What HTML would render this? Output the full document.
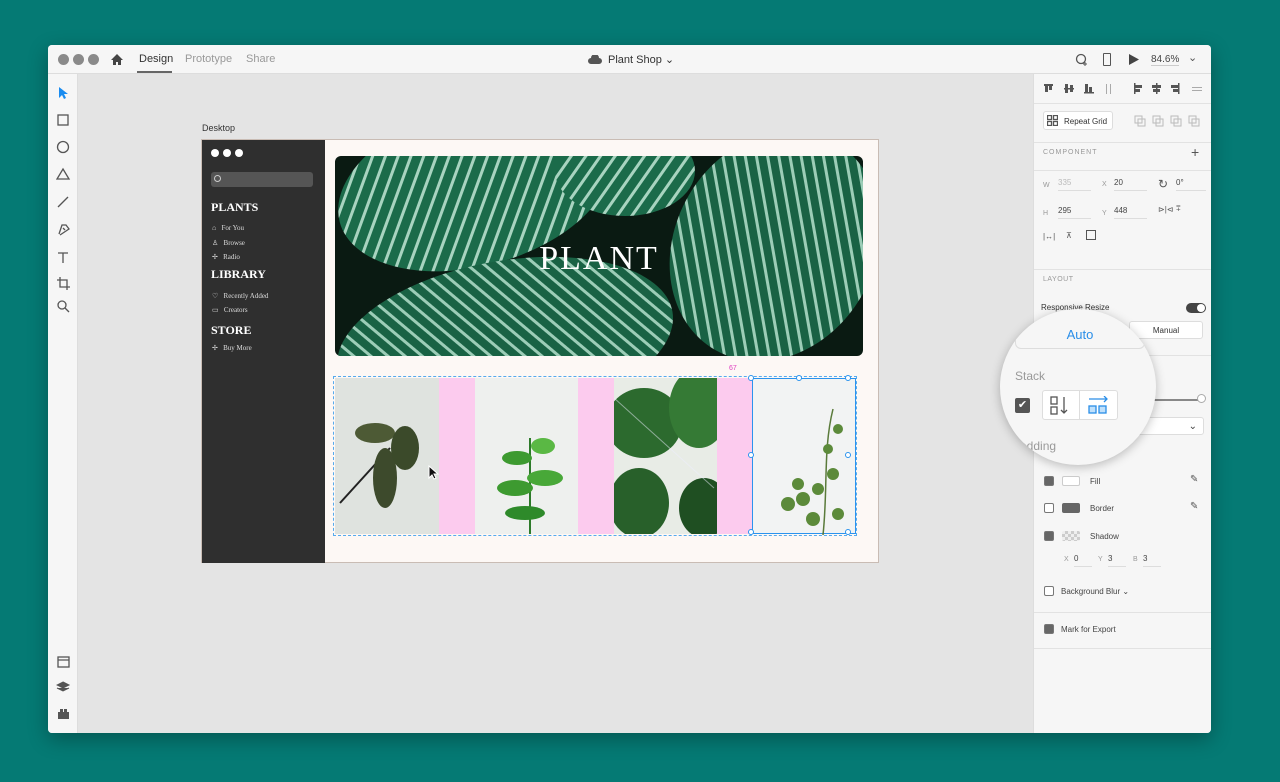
<!DOCTYPE html><html><head><style>
*{box-sizing:border-box;margin:0;padding:0}
body{width:1280px;height:782px;background:#057a74;font-family:"Liberation Sans",sans-serif;position:relative;overflow:hidden}
.a{position:absolute}
.win{left:48px;top:45px;width:1163px;height:688px;background:#e4e4e4;border-radius:4px;overflow:hidden;box-shadow:0 6px 20px rgba(0,0,0,.3)}
.tb{left:0;top:0;width:1163px;height:29px;background:#f6f6f6;border-bottom:1px solid #ddd}
.dot{width:11px;height:11px;border-radius:50%;background:#8a8a8a;top:9px}
.tab{top:8px;font-size:11px;color:#999}
.lt{left:0;top:29px;width:30px;height:659px;background:#f6f6f6;border-right:1px solid #ddd}
.rp{left:985px;top:29px;width:178px;height:659px;background:#f6f6f6;border-left:1px solid #ddd;font-size:8px;color:#444}
.hr{left:0;width:178px;height:1px;background:#e2e2e2}
.g{color:#999}
.sb{font-family:"Liberation Serif",serif;color:#fff}
.cb{width:10px;height:10px;border:1px solid #777;border-radius:2px;background:#666}
.cb.e{background:#fff}
.ic{stroke:#555;fill:none;stroke-width:1.3}
</style></head><body>
<div class="a win">
 <div class="a tb">
  <div class="a dot" style="left:10px"></div><div class="a dot" style="left:25px"></div><div class="a dot" style="left:40px"></div>
  <svg class="a" style="left:62px;top:8px" width="14" height="13"><path d="M7 1L1 7h2v5h3V9h2v3h3V7h2z" fill="#444"/></svg>
  <div class="a tab" style="left:91px;color:#333">Design</div>
  <div class="a" style="left:89px;top:26px;width:35px;height:2px;background:#666"></div>
  <div class="a tab" style="left:137px">Prototype</div>
  <div class="a tab" style="left:198px">Share</div>
  <svg class="a" style="left:540px;top:10px" width="14" height="9"><path d="M3 9a3 3 0 010-6 4 4 0 018 0 3 3 0 010 6z" fill="#555"/></svg>
  <div class="a tab" style="left:560px;color:#333">Plant Shop ⌄</div>
  <svg class="a" style="left:1027px;top:8px" width="14" height="14"><circle cx="6" cy="6" r="4.5" class="ic" stroke-width="2"/><path d="M10 9v4M8 11h4" stroke="#555"/></svg>
  <div class="a" style="left:1055px;top:8px;width:8px;height:13px;border:1.5px solid #555;border-radius:1px"></div>
  <svg class="a" style="left:1081px;top:9px" width="10" height="11"><path d="M0 0l10 5.5L0 11z" fill="#444"/></svg>
  <div class="a tab" style="left:1103px;color:#444;font-size:10px;top:9px;border-bottom:1px solid #ccc">84.6%</div>
  <div class="a tab" style="left:1140px;color:#555;top:6px">⌄</div>
 </div>
 <div class="a lt">
  <svg class="a" style="left:10px;top:13px" width="10" height="12"><path d="M1 0v11l3-3 2 4 2-1-2-4h4z" fill="#1a8cf0"/></svg>
  <svg class="a" style="left:8px;top:38px" width="16" height="260">
   <rect x="2" y="3" width="10" height="10" class="ic"/><circle cx="7" cy="35" r="5.5" class="ic"/><path d="M7 57l6 10H1z" class="ic"/><path d="M2 95l10-10" class="ic"/>
   <path d="M3 122l3-9 4 0 3 4-9 6M7 116l2 2" class="ic"/><path d="M2 141h10M7 141v10" class="ic" stroke-width="1.6"/>
   <path d="M4 165v10h10M1 168h10v10" class="ic"/><circle cx="6" cy="193" r="4" class="ic"/><path d="M9 196l4 4" class="ic"/>
  </svg>
  <svg class="a" style="left:8px;top:580px" width="16" height="72">
   <rect x="2" y="3" width="11" height="10" class="ic"/><path d="M2 6h11" class="ic"/><path d="M7 28l6 3-6 3-6-3z M1 34l6 3 6-3" fill="#555" stroke="#555"/><rect x="2" y="58" width="11" height="7" fill="#555"/><rect x="4" y="55" width="3" height="4" fill="#555"/><rect x="8" y="55" width="3" height="4" fill="#555"/>
  </svg>
 </div>
 <div class="a" style="left:154px;top:78px;font-size:9px;color:#333">Desktop</div>
 <div class="a" style="left:153px;top:94px;width:678px;height:424px;background:#fdf8f5;border:1px solid #c9bcb4">
  <div class="a" style="left:0;top:0;width:123px;height:423px;background:#2f2f2f">
   <div class="a" style="left:9px;top:9px;width:8px;height:8px;border-radius:50%;background:#fff"></div>
   <div class="a" style="left:21px;top:9px;width:8px;height:8px;border-radius:50%;background:#fff"></div>
   <div class="a" style="left:33px;top:9px;width:8px;height:8px;border-radius:50%;background:#fff"></div>
   <div class="a" style="left:9px;top:32px;width:102px;height:15px;border-radius:3px;background:#555"></div>
   <div class="a" style="left:12px;top:35px;width:7px;height:7px;border:1px solid #ccc;border-radius:50%"></div>
   <div class="a sb" style="left:9px;top:60px;font-size:12px;font-weight:bold">PLANTS</div>
   <div class="a sb" style="left:10px;top:81px;font-size:7px;line-height:14.5px;color:#ddd">⌂&nbsp;&nbsp; For You<br>♙&nbsp;&nbsp; Browse<br>✢&nbsp;&nbsp; Radio</div>
   <div class="a sb" style="left:9px;top:127px;font-size:12px;font-weight:bold">LIBRARY</div>
   <div class="a sb" style="left:10px;top:149px;font-size:7px;line-height:14px;color:#ddd">♡&nbsp;&nbsp; Recently Added<br>▭&nbsp;&nbsp; Creators</div>
   <div class="a sb" style="left:9px;top:183px;font-size:12px;font-weight:bold">STORE</div>
   <div class="a sb" style="left:10px;top:204px;font-size:7px;color:#ddd">✢&nbsp;&nbsp; Buy More</div>
  </div>
  <div class="a" style="left:133px;top:16px;width:528px;height:200px;border-radius:6px;overflow:hidden;background:#0a1a12">
   <svg width="528" height="200">
    <defs><pattern id="st" width="12" height="12" patternUnits="userSpaceOnUse" patternTransform="rotate(35)"><rect width="12" height="12" fill="#1b6b4a"/><rect width="3" height="12" fill="#a8d4c0"/></pattern>
    <pattern id="st2" width="11" height="11" patternUnits="userSpaceOnUse" patternTransform="rotate(-40)"><rect width="11" height="11" fill="#196244"/><rect width="3" height="11" fill="#9ccdb7"/></pattern></defs>
    <ellipse cx="140" cy="30" rx="140" ry="80" fill="url(#st)" transform="rotate(-15 140 30)"/>
    <ellipse cx="440" cy="90" rx="100" ry="120" fill="url(#st2)" transform="rotate(30 440 90)"/>
    <ellipse cx="170" cy="185" rx="170" ry="80" fill="url(#st2)" transform="rotate(-10 170 185)"/>
    <ellipse cx="290" cy="15" rx="70" ry="45" fill="url(#st)"/>
   </svg>
   <div class="a" style="left:0;top:84px;width:528px;text-align:center;font-family:'Liberation Serif',serif;font-size:34px;color:#fff;letter-spacing:2px">PLANT</div>
  </div>
  <div class="a" style="left:131px;top:236px;width:524px;height:160px;border:1px dashed #55aaee"></div>
  <div class="a" style="left:133px;top:238px;width:104px;height:156px;background:#dfe3df">
   <svg width="104" height="156"><path d="M5 125L55 70" stroke="#222" stroke-width="2"/><ellipse cx="50" cy="100" rx="12" ry="30" fill="#3d4a2c"/><ellipse cx="40" cy="55" rx="20" ry="10" fill="#4d5a35"/><ellipse cx="70" cy="70" rx="14" ry="22" fill="#3b4a2a"/></svg>
  </div>
  <div class="a" style="left:237px;top:238px;width:36px;height:156px;background:#fccbee"></div>
  <div class="a" style="left:273px;top:238px;width:103px;height:156px;background:#eef0ee">
   <svg width="103" height="156"><path d="M55 156V60" stroke="#2d7a2a" stroke-width="2"/><ellipse cx="40" cy="110" rx="18" ry="8" fill="#3d9a30"/><ellipse cx="70" cy="100" rx="18" ry="8" fill="#48a838"/><ellipse cx="42" cy="80" rx="15" ry="7" fill="#3d9a30"/><ellipse cx="68" cy="68" rx="12" ry="8" fill="#5ab844"/><ellipse cx="50" cy="135" rx="20" ry="7" fill="#2e8a2a"/></svg>
  </div>
  <div class="a" style="left:376px;top:238px;width:36px;height:156px;background:#fccbee"></div>
  <div class="a" style="left:412px;top:238px;width:103px;height:156px;background:#e8ece6">
   <svg width="103" height="156"><ellipse cx="30" cy="45" rx="38" ry="35" fill="#2c6a2e"/><ellipse cx="85" cy="30" rx="30" ry="40" fill="#357a35"/><ellipse cx="25" cy="125" rx="30" ry="35" fill="#28602a"/><ellipse cx="90" cy="130" rx="25" ry="30" fill="#1f4f22"/><path d="M0 20L100 110" stroke="#eef" stroke-width="1" opacity=".5"/></svg>
  </div>
  <div class="a" style="left:515px;top:238px;width:35px;height:156px;background:#fccbee"></div>
  <div class="a" style="left:550px;top:238px;width:104px;height:156px;background:#f2f3f3;border:1px solid #2b93ee">
   <svg width="104" height="156"><path d="M70 156C75 110 70 70 80 30" stroke="#5a7a3a" stroke-width="1.5" fill="none"/><g fill="#5c8a3a"><circle cx="35" cy="125" r="7"/><circle cx="50" cy="120" r="7"/><circle cx="65" cy="110" r="6"/><circle cx="80" cy="95" r="6"/><circle cx="75" cy="70" r="5"/><circle cx="85" cy="50" r="5"/><circle cx="45" cy="105" r="6"/><circle cx="60" cy="140" r="7"/><circle cx="85" cy="135" r="6"/></g></svg>
  </div>
  <div class="a" style="left:527px;top:225px;font-size:7px;color:#e040c0">67</div>
  <div class="a" style="left:544px;top:233px;width:111px;height:165px">
   <div class="a" style="left:2px;top:2px;width:6px;height:6px;border:1px solid #2b93ee;background:#fff;border-radius:50%"></div>
   <div class="a" style="left:50px;top:2px;width:6px;height:6px;border:1px solid #2b93ee;background:#fff;border-radius:50%"></div>
   <div class="a" style="left:99px;top:2px;width:6px;height:6px;border:1px solid #2b93ee;background:#fff;border-radius:50%"></div>
   <div class="a" style="left:2px;top:79px;width:6px;height:6px;border:1px solid #2b93ee;background:#fff;border-radius:50%"></div>
   <div class="a" style="left:99px;top:79px;width:6px;height:6px;border:1px solid #2b93ee;background:#fff;border-radius:50%"></div>
   <div class="a" style="left:2px;top:156px;width:6px;height:6px;border:1px solid #2b93ee;background:#fff;border-radius:50%"></div>
   <div class="a" style="left:99px;top:156px;width:6px;height:6px;border:1px solid #2b93ee;background:#fff;border-radius:50%"></div>
  </div>
 </div>
 <svg class="a" style="left:380px;top:420px" width="11" height="15"><path d="M1 1v12l3-3 2 4 2-1-2-4h4z" fill="#111" stroke="#fff"/></svg>
 <div class="a rp">
  <svg class="a" style="left:10px;top:8px" width="160" height="14" fill="#555"><rect x="0" y="2" width="9" height="2"/><rect x="1" y="2" width="3" height="8"/><rect x="5" y="2" width="3" height="6"/><rect x="20" y="6" width="10" height="1.5"/><rect x="21" y="2" width="3" height="9"/><rect x="26" y="3" width="3" height="7"/><rect x="40" y="10" width="10" height="1.5"/><rect x="41" y="2" width="3" height="8"/><rect x="45" y="5" width="3" height="5"/><rect x="62" y="2" width="1" height="10" fill="#aaa"/><rect x="66" y="2" width="1" height="10" fill="#aaa"/><rect x="90" y="1" width="1.5" height="11"/><rect x="91" y="3" width="7" height="3"/><rect x="91" y="7" width="5" height="3"/><rect x="112" y="1" width="1.5" height="11"/><rect x="108" y="3" width="9" height="3"/><rect x="109" y="7" width="7" height="3"/><rect x="134" y="1" width="1.5" height="11"/><rect x="127" y="3" width="7" height="3"/><rect x="129" y="7" width="5" height="3"/><rect x="148" y="5" width="10" height="1" fill="#aaa"/><rect x="148" y="8" width="10" height="1" fill="#aaa"/></svg>
  <div class="a hr" style="top:29px"></div>
  <div class="a" style="left:9px;top:37px;width:70px;height:19px;border:1px solid #ddd;background:#fff;border-radius:3px;padding:5px 0 0 20px;color:#333">Repeat Grid</div>
  <svg class="a" style="left:13px;top:41px" width="11" height="11"><rect x=".5" y=".5" width="4" height="4" class="ic" stroke-width="1"/><rect x="6.5" y=".5" width="4" height="4" class="ic" stroke-width="1"/><rect x=".5" y="6.5" width="4" height="4" class="ic" stroke-width="1"/><rect x="6.5" y="6.5" width="4" height="4" class="ic" stroke-width="1"/></svg>
  <svg class="a" style="left:100px;top:41px" width="70" height="12" stroke="#bbb" fill="none"><rect x="1" y="1" width="7" height="7"/><rect x="4" y="4" width="7" height="7"/><rect x="19" y="1" width="7" height="7"/><rect x="22" y="4" width="7" height="7"/><rect x="37" y="1" width="7" height="7"/><rect x="40" y="4" width="7" height="7"/><rect x="55" y="1" width="7" height="7"/><rect x="58" y="4" width="7" height="7"/></svg>
  <div class="a hr" style="top:68px"></div>
  <div class="a g" style="left:9px;top:75px;letter-spacing:1px;font-size:7px">COMPONENT</div>
  <div class="a" style="left:157px;top:70px;font-size:14px;color:#555">+</div>
  <div class="a hr" style="top:96px"></div>
  <div class="a g" style="left:9px;top:108px;font-size:7px">W</div><div class="a" style="left:24px;top:104px;width:33px;border-bottom:1px solid #ddd;color:#bbb;padding-bottom:3px">335</div>
  <div class="a g" style="left:68px;top:107px;font-size:7px">X</div><div class="a" style="left:80px;top:104px;width:33px;border-bottom:1px solid #ddd;padding-bottom:3px">20</div>
  <div class="a" style="left:124px;top:103px;font-size:12px;color:#555">↻</div><div class="a" style="left:142px;top:104px;width:30px;border-bottom:1px solid #ddd;padding-bottom:3px">0°</div>
  <div class="a g" style="left:9px;top:136px;font-size:7px">H</div><div class="a" style="left:24px;top:132px;width:33px;border-bottom:1px solid #ddd;padding-bottom:3px">295</div>
  <div class="a g" style="left:68px;top:136px;font-size:7px">Y</div><div class="a" style="left:80px;top:132px;width:33px;border-bottom:1px solid #ddd;padding-bottom:3px">448</div>
  <div class="a" style="left:124px;top:131px;color:#555">⊳|⊲</div><div class="a" style="left:142px;top:130px;color:#555">⩱</div>
  <div class="a" style="left:9px;top:158px;color:#555">|↔|</div><div class="a" style="left:32px;top:157px;color:#555">⊼</div><div class="a" style="left:52px;top:156px;width:10px;height:10px;border:1px solid #555"></div>
  <div class="a hr" style="top:195px"></div>
  <div class="a g" style="left:9px;top:202px;font-size:7px;letter-spacing:.5px">LAYOUT</div>
  <div class="a" style="left:7px;top:229px;color:#333">Responsive Resize</div>
  <div class="a" style="left:152px;top:229px;width:20px;height:10px;border-radius:5px;background:#444"><div class="a" style="left:11px;top:1px;width:8px;height:8px;border-radius:50%;background:#fff"></div></div>
  <div class="a" style="left:95px;top:247px;width:74px;height:18px;border:1px solid #ddd;background:#fff;border-radius:3px;text-align:center;padding-top:4px;color:#333">Manual</div>
  <div class="a hr" style="top:281px"></div>
  <div class="a" style="left:110px;top:325px;width:60px;height:1.5px;background:#888"></div>
  <div class="a" style="left:163px;top:320px;width:9px;height:9px;border-radius:50%;background:#fff;border:1px solid #aaa"></div>
  <div class="a" style="left:90px;top:343px;width:80px;height:18px;border:1px solid #ddd;background:#fff;border-radius:3px;text-align:right;padding:3px 6px 0 0;font-size:10px">⌄</div>
  <div class="a cb" style="left:10px;top:402px"></div><div class="a" style="left:28px;top:402px;width:18px;height:10px;border:1px solid #ccc;background:#fff;border-radius:2px"></div><div class="a" style="left:56px;top:403px">Fill</div><div class="a" style="left:156px;top:400px;font-size:10px;color:#555">✎</div>
  <div class="a cb e" style="left:10px;top:429px"></div><div class="a" style="left:28px;top:429px;width:18px;height:10px;background:#666;border-radius:2px"></div><div class="a" style="left:56px;top:430px">Border</div><div class="a" style="left:156px;top:427px;font-size:10px;color:#555">✎</div>
  <div class="a cb" style="left:10px;top:457px"></div><div class="a" style="left:28px;top:457px;width:18px;height:10px;background:repeating-conic-gradient(#ccc 0 25%,#eee 0 50%) 0 0/6px 6px;border-radius:2px"></div><div class="a" style="left:56px;top:458px">Shadow</div>
  <div class="a g" style="left:30px;top:482px;font-size:7px">X</div><div class="a" style="left:40px;top:480px;width:18px;border-bottom:1px solid #ddd;padding-bottom:3px">0</div>
  <div class="a g" style="left:64px;top:482px;font-size:7px">Y</div><div class="a" style="left:74px;top:480px;width:18px;border-bottom:1px solid #ddd;padding-bottom:3px">3</div>
  <div class="a g" style="left:99px;top:482px;font-size:7px">B</div><div class="a" style="left:109px;top:480px;width:18px;border-bottom:1px solid #ddd;padding-bottom:3px">3</div>
  <div class="a cb e" style="left:10px;top:512px"></div><div class="a" style="left:27px;top:513px">Background Blur ⌄</div>
  <div class="a hr" style="top:538px"></div>
  <div class="a cb" style="left:10px;top:550px"></div><div class="a" style="left:27px;top:551px">Mark for Export</div>
  <div class="a hr" style="top:574px"></div>
 </div>
 <div class="a" style="left:952px;top:264px;width:156px;height:156px;border-radius:50%;background:#f6f6f6;box-shadow:0 2px 10px rgba(0,0,0,.25);overflow:hidden">
  <div class="a" style="left:15px;top:10px;width:130px;height:30px;border:1px solid #ddd;border-top:none;border-radius:0 0 6px 6px;background:#f6f6f6;text-align:center;padding-top:8px;font-size:13px;color:#2a8ee8">Auto</div>
  <div class="a" style="left:15px;top:60px;font-size:12px;color:#999">Stack</div>
  <div class="a" style="left:15px;top:89px;width:15px;height:15px;border-radius:2px;background:#555;color:#fff;font-size:11px;text-align:center;line-height:15px">✔</div>
  <div class="a" style="left:42px;top:81px;width:76px;height:30px;border:1px solid #ddd;background:#fff;border-radius:3px"></div>
  <div class="a" style="left:79px;top:81px;width:1px;height:30px;background:#ddd"></div>
  <svg class="a" style="left:50px;top:87px" width="22" height="20"><rect x="1" y="1" width="6" height="7" fill="none" stroke="#555" stroke-width="1.3"/><rect x="1" y="11" width="6" height="7" fill="none" stroke="#555" stroke-width="1.3"/><path d="M14 1v16M11 14l3 3 3-3" stroke="#555" stroke-width="1.3" fill="none"/></svg>
  <svg class="a" style="left:88px;top:87px" width="22" height="20"><path d="M1 3h18M16 0l3 3-3 3" stroke="#2a8ee8" stroke-width="1.3" fill="none"/><rect x="1" y="10" width="7" height="7" fill="#bfe0fb" stroke="#2a8ee8" stroke-width="1.3"/><rect x="11" y="10" width="7" height="7" fill="#bfe0fb" stroke="#2a8ee8" stroke-width="1.3"/></svg>
  <div class="a" style="left:12px;top:130px;font-size:12px;color:#999">Padding</div>
 </div>
</div>
</body></html>
